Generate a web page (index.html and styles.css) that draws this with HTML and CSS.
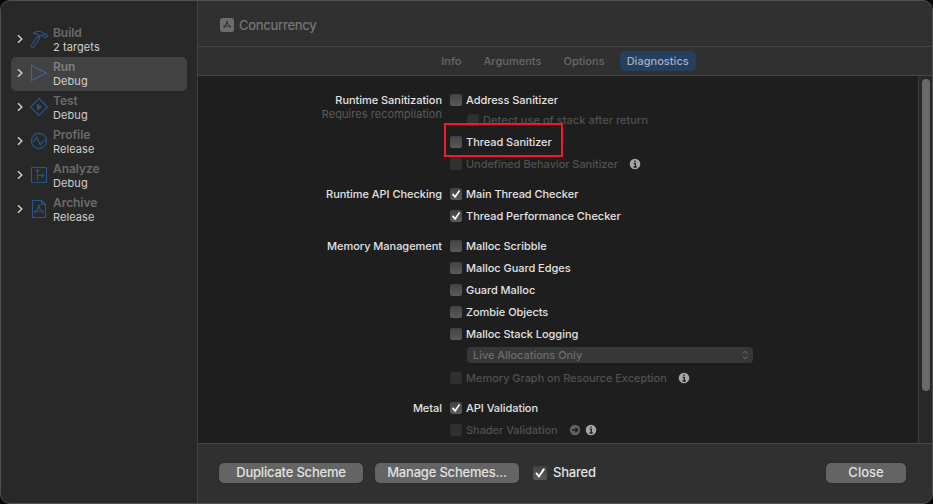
FILE: index.html
```html
<!DOCTYPE html>
<html lang="en">
<head>
<meta charset="utf-8">
<title>Scheme Editor</title>
<link rel="stylesheet" href="styles.css">
</head>
<body>
<div class="window">
  <nav class="sidebar">
    <div class="action">
      <svg class="chevron" viewBox="0 0 6 10"><path d="M1 1.200 4.800 5 1 8.800"/></svg>
      <svg class="icon" viewBox="0 0 20 20"><path d="M4.500 4.300C6.500 2 10.500 1.800 13 3.200L15.500 5.500 17.200 5.200 18.500 6.800 16.500 8.900 14.800 7.800 14.200 6.400 12.300 6 10.800 7.400 8.800 5.600C8 4.300 6 4.500 4.500 4.300Z"/><path d="M8.700 7.200 10.800 8.900 4.500 18.300C3.500 19 1.500 17.800 2 16.500Z"/></svg>
      <div class="labels"><b>Build</b><span>2 targets</span></div>
    </div>
    <div class="action selected">
      <svg class="chevron" viewBox="0 0 6 10"><path d="M1 1.200 4.800 5 1 8.800"/></svg>
      <svg class="icon" viewBox="0 0 20 20"><path d="M2.500 2.500V17.500L17.500 10Z"/></svg>
      <div class="labels"><b>Run</b><span>Debug</span></div>
    </div>
    <div class="action">
      <svg class="chevron" viewBox="0 0 6 10"><path d="M1 1.200 4.800 5 1 8.800"/></svg>
      <svg class="icon" viewBox="0 0 20 20"><path d="M10 1.500 18.500 10 10 18.500 1.500 10Z"/><path class="solid" d="M8 6.500V13.500L13.200 10Z"/></svg>
      <div class="labels"><b>Test</b><span>Debug</span></div>
    </div>
    <div class="action">
      <svg class="chevron" viewBox="0 0 6 10"><path d="M1 1.200 4.800 5 1 8.800"/></svg>
      <svg class="icon" viewBox="0 0 20 20"><circle cx="10" cy="10" r="7.600"/><path d="M2.400 10H5.300L7.700 6.200 11.300 14 13.800 10H17.600"/></svg>
      <div class="labels"><b>Profile</b><span>Release</span></div>
    </div>
    <div class="action">
      <svg class="chevron" viewBox="0 0 6 10"><path d="M1 1.200 4.800 5 1 8.800"/></svg>
      <svg class="icon" viewBox="0 0 20 20"><rect x="2.500" y="2.500" width="15" height="15" rx=".5"/><path d="M8.500 15.500V5M6.700 6.500 8.500 4.500 10.300 6.500M8.500 10.500H14.500M12.700 8.600 14.700 10.500 12.700 12.400"/></svg>
      <div class="labels"><b>Analyze</b><span>Debug</span></div>
    </div>
    <div class="action">
      <svg class="chevron" viewBox="0 0 6 10"><path d="M1 1.200 4.800 5 1 8.800"/></svg>
      <svg class="icon" viewBox="0 0 20 20"><path d="M3.500 1.500H12.500L16.500 5.500V18.500H3.500ZM12.500 1.500V5.500H16.500"/><path d="M9 6 13.500 14.500M10.700 6 6 14.500M4.700 12.200H10.500M12.800 12.200H15.300"/></svg>
      <div class="labels"><b>Archive</b><span>Release</span></div>
    </div>
  </nav>

  <main class="main">
    <header class="title">
      <svg class="app" viewBox="0 0 14 14"><rect width="14" height="14" rx="2.500"/><path d="M6.300 3.200 10 9.800M7.700 3.200 4.200 9.800M3 8.300H7.400M9.200 8.300H11"/></svg>
      <span>Concurrency</span>
    </header>
    <div class="tabs">
      <span class="tab">Info</span>
      <span class="tab">Arguments</span>
      <span class="tab">Options</span>
      <span class="tab active">Diagnostics</span>
    </div>

    <div class="body">
      <div class="form">
        <section class="group">
          <div class="heading">Runtime Sanitization<small>Requires recompilation</small></div>
          <div class="rows">
            <div class="row"><i class="box"></i><span>Address Sanitizer</span></div>
            <div class="row nested disabled"><i class="box"></i><span>Detect use of stack after return</span></div>
            <div class="row marked"><i class="box"></i><span>Thread Sanitizer</span></div>
            <div class="row disabled"><i class="box"></i><span>Undefined Behavior Sanitizer</span>
              <svg class="info" viewBox="0 0 12 12"><circle cx="6" cy="6" r="5.300"/><path d="M6 2.500V4M4.700 5.300H6.300V9M4.500 9H7.800"/></svg></div>
          </div>
        </section>
        <section class="group">
          <div class="heading">Runtime API Checking</div>
          <div class="rows">
            <div class="row"><i class="box"><svg viewBox="0 0 12 12"><path d="M3 6.400 5.100 9 9.200 2.900"/></svg></i><span>Main Thread Checker</span></div>
            <div class="row"><i class="box"><svg viewBox="0 0 12 12"><path d="M3 6.400 5.100 9 9.200 2.900"/></svg></i><span>Thread Performance Checker</span></div>
          </div>
        </section>
        <section class="group">
          <div class="heading">Memory Management</div>
          <div class="rows">
            <div class="row"><i class="box"></i><span>Malloc Scribble</span></div>
            <div class="row"><i class="box"></i><span>Malloc Guard Edges</span></div>
            <div class="row"><i class="box"></i><span>Guard Malloc</span></div>
            <div class="row"><i class="box"></i><span>Zombie Objects</span></div>
            <div class="row"><i class="box"></i><span>Malloc Stack Logging</span></div>
            <div class="select"><span>Live Allocations Only</span><svg viewBox="0 0 6 10"><path d="M.8 3.500 3 1.300 5.200 3.500M.8 6.500 3 8.700 5.200 6.500"/></svg></div>
            <div class="row disabled"><i class="box"></i><span>Memory Graph on Resource Exception</span>
              <svg class="info" viewBox="0 0 12 12"><circle cx="6" cy="6" r="5.300"/><path d="M6 2.500V4M4.700 5.300H6.300V9M4.500 9H7.800"/></svg></div>
          </div>
        </section>
        <section class="group">
          <div class="heading">Metal</div>
          <div class="rows">
            <div class="row"><i class="box"><svg viewBox="0 0 12 12"><path d="M3 6.400 5.100 9 9.200 2.900"/></svg></i><span>API Validation</span></div>
            <div class="row disabled"><i class="box"></i><span>Shader Validation</span>
              <svg class="info go" viewBox="0 0 12 12"><circle cx="6" cy="6" r="5.200"/><path d="M3 6H8.500M6.300 3.800 8.600 6 6.300 8.200"/></svg>
              <svg class="info next" viewBox="0 0 12 12"><circle cx="6" cy="6" r="5.300"/><path d="M6 2.500V4M4.700 5.300H6.300V9M4.500 9H7.800"/></svg></div>
          </div>
        </section>
      </div>
      <div class="scroller"><div class="thumb"></div></div>
    </div>

    <footer class="footer">
      <div class="button wide">Duplicate Scheme</div>
      <div class="button wide">Manage Schemes...</div>
      <div class="shared"><i class="box large"><svg viewBox="0 0 12 12"><path d="M3 6.400 5.100 9 9.200 2.900"/></svg></i><span>Shared</span></div>
      <div class="button close">Close</div>
    </footer>
  </main>
</div>
</body>
</html>
```
FILE: styles.css
```css
*, *::after { box-sizing: border-box; }
body {
  margin: 0;
  background: #080808;
  font-family: Inter, "Liberation Sans", sans-serif;
  font-size: 11px;
  color: #e2e2e2;
}
svg { display: block; flex: none; fill: none; }
.window {
  display: flex;
  width: 933px;
  height: 504px;
  border: 1px solid #505050;
  border-radius: 10px;
  overflow: hidden;
  background: #303030;
}
.sidebar {
  width: 197px;
  flex: none;
  padding: 22px 10px 0;
  background: #282828;
  border-right: 1px solid #414141;
}
.action {
  display: flex;
  align-items: center;
  width: 176px;
  height: 34px;
  padding-left: 6px;
  border-radius: 5px;
}
.selected { background: #424242; }
.chevron { width: 6px; height: 10px; margin-bottom: 2px; stroke: #c8c8c8; stroke-width: 1.6; }
.icon { width: 20px; height: 20px; margin: 0 0 2px 6px; stroke: #28568a; stroke-width: 1.1; }
.selected .icon { stroke: #3a6699; }
.icon .solid { fill: #28568a; stroke: none; }
.labels { display: flex; flex-direction: column; margin-left: 4px; }
.labels b { margin-bottom: 2px; font-size: 12px; line-height: 13px; font-weight: 600; letter-spacing: -.05px; color: #6a6a6a; }
.labels .selected b, .selected b { color: #808080; }
.labels span { line-height: 13px; letter-spacing: .08px; color: #cecece; }
.main { flex: 1; display: flex; flex-direction: column; min-width: 0; }
.title {
  display: flex;
  align-items: center;
  gap: 5px;
  height: 46px;
  padding: 3px 0 0 22px;
  border-bottom: 1px solid #464646;
  font-size: 13px;
  font-weight: 500;
  letter-spacing: -.3px;
  color: #747474;
}
.app { width: 14px; height: 14px; fill: #6c6c6c; stroke: none; }
.app path { stroke: #303030; stroke-width: 1.1; }
.tabs {
  display: flex;
  align-items: center;
  justify-content: center;
  gap: 8px;
  height: 29px;
  border-bottom: 1px solid #464646;
  font-weight: 500;
  color: #686868;
}
.tab { height: 20px; line-height: 20px; padding: 0 7px; border-radius: 5px; letter-spacing: .03px; }
.active { background: #253f5e; color: #a5b1c0; }
.body { display: flex; height: 367px; background: #1e1e1e; }
.form { flex: 1; padding-top: 15px; }
.group { display: flex; margin-bottom: 12px; }
.heading {
  width: 244px;
  margin-right: 8px;
  text-align: right;
  line-height: 18px;
  font-weight: 500;
  letter-spacing: -.04px;
}
.heading small { display: block; font-size: 11px; line-height: 10px; font-weight: 400; color: #5a5a5a; letter-spacing: .06px; }
.rows { width: 330px; }
.row {
  display: flex;
  align-items: center;
  height: 18px;
  font-weight: 500;
  letter-spacing: -.04px;
  position: relative;
  white-space: nowrap;
}
.row + .row { margin-top: 4px; }
.row + .nested { margin-top: 2px; margin-left: 17px; letter-spacing: .04px; }
.box {
  width: 12px;
  height: 12px;
  margin-right: 4px;
  flex: none;
  border-radius: 2.5px;
  background: linear-gradient(#424242, #5a5a5a);
}
.box svg { width: 100%; height: 100%; stroke: #fff; stroke-width: 1.7; stroke-linecap: round; stroke-linejoin: round; }
.disabled { color: #505050; }
.disabled .box { background: #303030; }
.marked::after {
  content: "";
  position: absolute;
  left: -6px;
  top: -10px;
  width: 119px;
  height: 34px;
  border: 2px solid #ee1c25;
}
.info { width: 12px; height: 12px; margin-left: 11px; fill: #a5a5a5; }
.info path { fill: none; stroke: #1e1e1e; stroke-width: 1.3; }
.info.go { fill: #626262; }
.info.next { margin-left: 4px; }
.select {
  display: flex;
  align-items: center;
  justify-content: space-between;
  width: 286px;
  height: 16px;
  margin: 4px 0 6px 17px;
  padding: 0 5px 0 6px;
  border-radius: 4px;
  background: #373737;
  color: #6c6c6c;
  font-weight: 500;
  letter-spacing: -.04px;
}
.select svg { width: 6px; height: 10px; stroke: #747474; }
.scroller { width: 14px; border-left: 1px solid #3c3c3c; background: #282828; padding: 3px 0 0 3px; }
.thumb { width: 8px; height: 312px; border-radius: 4px; background: #696969; }
.footer {
  display: flex;
  align-items: center;
  flex: 1;
  padding: 0 26px 2px 21px;
  border-top: 1px solid #464646;
  font-size: 13px;
  font-weight: 500;
  letter-spacing: -.2px;
}
.button {
  height: 20px;
  line-height: 19px;
  border-radius: 5px;
  background: #646464;
  text-align: center;
  box-shadow: 0 0 1px #171717;
}
.wide { width: 144px; margin-right: 12px; }
.close { width: 80px; margin-left: auto; letter-spacing: 0; }
.shared { display: flex; align-items: center; margin-left: 2px; }
.shared span { margin-bottom: 2px; }
.large { width: 14px; height: 14px; margin-right: 6px; }
```
